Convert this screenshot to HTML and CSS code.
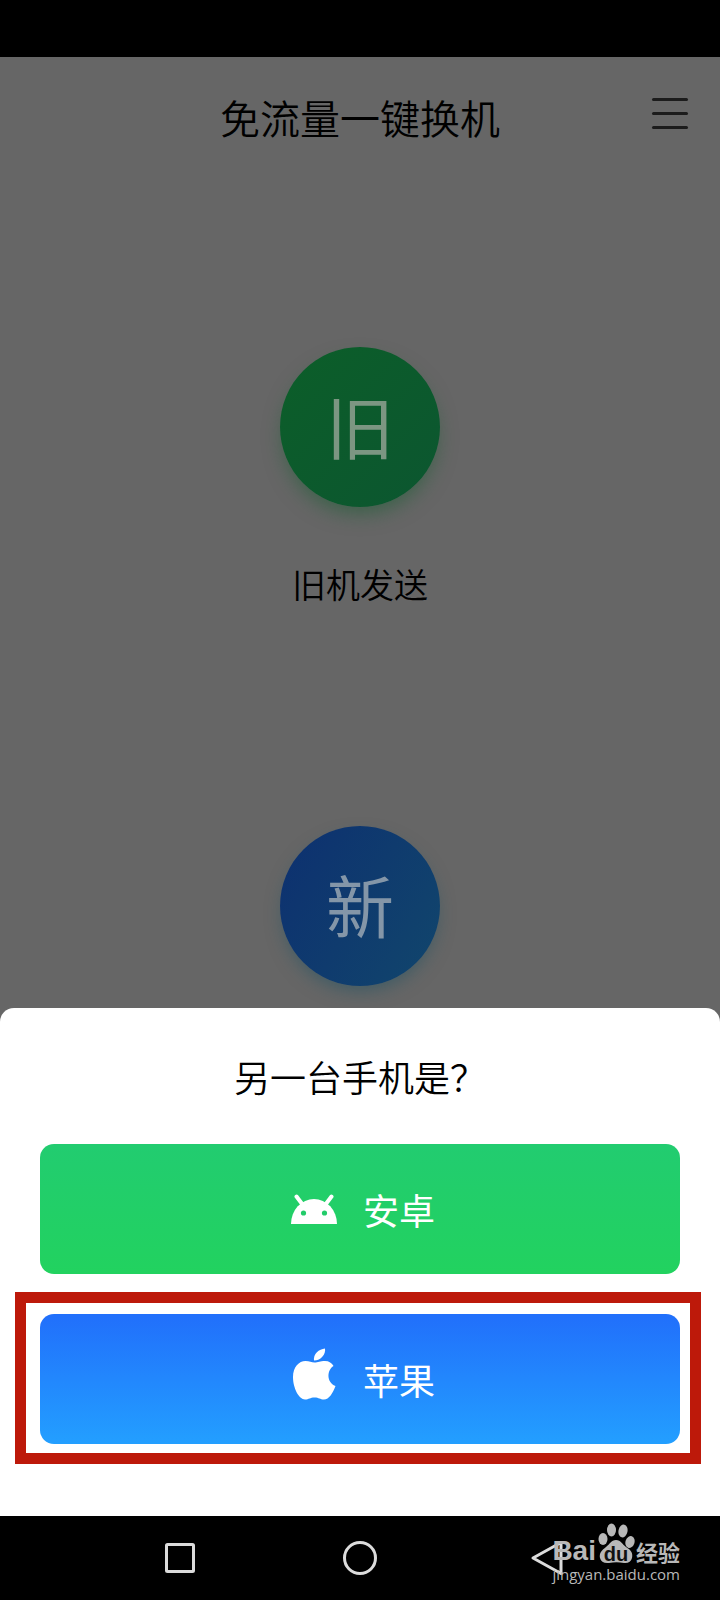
FILE: index.html
```html
<!DOCTYPE html>
<html lang="zh-CN">
<head>
  <meta charset="UTF-8" />
  <meta name="viewport" content="width=device-width, initial-scale=1" />
  <title>免流量一键换机</title>
  <link rel="stylesheet" href="styles.css">
</head>
<body>

  <div class="status-bar"></div>

  <header class="top-bar">
    <h1>免流量一键换机</h1>
    <button class="menu-button" aria-label="菜单">
      <span></span>
      <span></span>
      <span></span>
    </button>
  </header>

  <main class="devices">
    <div class="device">
      <button class="circle old">旧</button>
      <div class="device-label">旧机发送</div>
    </div>
    <div class="device">
      <button class="circle new">新</button>
    </div>
  </main>

  <section class="sheet">
    <h2>另一台手机是&#xFF1F;</h2>
    <button class="choice android">
      <svg width="46" height="30" viewBox="0 0 46 30">
        <path d="M0 30A23 25 0 0 1 46 30z" fill="#fff" />
        <path d="M5.500 2.500l6 8M40.500 2.500l-6 8" stroke="#fff" stroke-width="4" stroke-linecap="round" />
        <circle cx="12.500" cy="19" r="2.600" fill="#22cc6a" />
        <circle cx="33.500" cy="19" r="2.600" fill="#22cc6a" />
      </svg>
      安卓
    </button>
    <button class="choice apple">
      <svg width="46" height="52" viewBox="0 0 46 52">
        <path d="M23 12.500C22 6 28 1 34 0.500C35 6 30 12.500 23 12.500z" fill="#fff" />
        <path d="M23.500 14.500C27 14.500 29 13 34 13C38 13 41 15 42.500 18C36 22 35 34 44.500 38C42 45 38 51.500 33 51.500C29 51.500 28 49.500 23.500 49.500C19 49.500 18 51.500 14 51.500C8 51.500 2 40 2 29C2 19 8 13 14.500 13C18.500 13 20.500 14.500 23.500 14.500z" fill="#fff" />
      </svg>
      苹果
    </button>
  </section>

  <nav class="nav-bar">
    <button aria-label="最近任务">
      <svg width="36" height="36" viewBox="0 0 36 36"><rect x="4.500" y="4.500" width="27" height="27" rx="1" /></svg>
    </button>
    <button aria-label="主页">
      <svg width="36" height="36" viewBox="0 0 36 36"><circle cx="18" cy="18" r="15.500" /></svg>
    </button>
    <button class="back" aria-label="返回">
      <svg width="36" height="36" viewBox="0 0 36 36"><path d="M31 2.500v31L3 18z" stroke-linejoin="round" /></svg>
    </button>
    <div class="watermark">
      <div class="brand">
        <span>Bai</span>
        <span class="paw">
          <svg width="38" height="42" viewBox="0 0 38 42">
            <ellipse cx="6" cy="17" rx="4.500" ry="6" />
            <ellipse cx="14.500" cy="8" rx="4.500" ry="6.500" />
            <ellipse cx="26" cy="9" rx="4.500" ry="6.500" transform="rotate(12 26 9)" />
            <ellipse cx="33" cy="20" rx="4.500" ry="6" transform="rotate(18 33 20)" />
            <path d="M19 18C24 18 25 22 29 25C34 28 36 31 35 36C34 40 31 41.500 27 41C22 40 17 40 12 41C7 41.500 4 40 3 36C2 31 5 28 9 25C13 22 14 18 19 18z" />
          </svg>
          <b>du</b>
        </span>
        <span class="brand-cn">经验</span>
      </div>
      <div class="url">jingyan.baidu.com</div>
    </div>
  </nav>

</body>
</html>
```
FILE: styles.css
```css
* {
  box-sizing: border-box;
}

body {
  margin: 0;
  min-height: 100vh;
  display: flex;
  flex-direction: column;
  background: #666;
  color: #000;
  font-family: "Noto Sans CJK SC", sans-serif;
}

button {
  margin: 0;
  padding: 0;
  border: 0;
  background: none;
  font-family: inherit;
  cursor: pointer;
}

h1, h2 {
  margin: 0;
  font-weight: 350;
}

.status-bar {
  height: 57px;
  background: #000;
}

.top-bar {
  display: grid;
  grid-template-columns: 1fr auto 1fr;
  align-items: center;
  height: 120px;
  padding: 0 32px;
}

.top-bar h1 {
  grid-column: 2;
  font-size: 40px;
  line-height: 60px;
}

.menu-button {
  display: flex;
  flex-direction: column;
  gap: 11px;
  justify-self: end;
  padding-bottom: 8px;
}

.menu-button span {
  width: 36px;
  height: 3px;
  border-radius: 2px;
  background: #1c1c1c;
}

.devices {
  flex: 1;
  display: flex;
  flex-direction: column;
  gap: 217px;
  padding-top: 170px;
}

.device {
  display: flex;
  flex-direction: column;
  align-items: center;
  gap: 52px;
}

.circle {
  width: 160px;
  height: 160px;
  padding-bottom: 4px;
  border-radius: 50%;
  font-size: 68px;
  font-weight: 400;
  line-height: 100px;
}

.circle.old {
  background: linear-gradient(135deg, #0c5e29, #0c5630);
  box-shadow: 0 10px 20px -4px rgba(12, 94, 41, 0.5);
  color: #7c9682;
}

.circle.new {
  background: linear-gradient(120deg, #0d3070, #11466c);
  box-shadow: 0 8px 18px -4px rgba(17, 80, 100, 0.5);
  color: #8496a8;
}

.device-label {
  font-size: 34px;
  font-weight: 350;
  line-height: 50px;
}

.sheet {
  display: flex;
  flex-direction: column;
  gap: 40px;
  padding: 40px 40px 72px;
  border-radius: 14px 14px 0 0;
  background: #fff;
}

.sheet h2 {
  font-size: 36px;
  line-height: 56px;
  text-align: center;
}

.choice {
  position: relative;
  display: flex;
  align-items: center;
  justify-content: center;
  gap: 26px;
  height: 130px;
  padding-left: 6px;
  border-radius: 14px;
  color: #fff;
  font-size: 36px;
  font-weight: 400;
  line-height: 54px;
}

.choice.android {
  background: linear-gradient(#22cc70, #22d25f);
}

.choice.apple {
  background: linear-gradient(#216ffb, #239fff);
}

.choice.apple svg {
  margin-bottom: 10px;
}

/* red frame around the recommended choice */
.choice.apple::after {
  content: "";
  position: absolute;
  inset: -22px -21px -20px -25px;
  border: 11px solid #bd190a;
}

.nav-bar {
  position: relative;
  display: grid;
  grid-template-columns: repeat(3, 1fr);
  align-items: center;
  height: 84px;
  padding: 0 12.5%;
  background: #000;
}

.nav-bar button {
  display: flex;
  justify-content: center;
}

.nav-bar .back {
  padding-left: 16px;
}

.nav-bar button svg {
  fill: none;
  stroke: #dcdcdc;
  stroke-width: 3;
}

.watermark {
  position: absolute;
  right: 40px;
  bottom: 16px;
  color: #b8b8b8;
}

.brand {
  display: flex;
  align-items: flex-end;
  justify-content: space-between;
  font-family: "Liberation Sans", sans-serif;
  font-size: 28px;
  font-weight: bold;
  line-height: 26px;
}

.brand-cn {
  font-family: "Noto Sans CJK SC", sans-serif;
  font-size: 22px;
}

.paw {
  position: relative;
  display: flex;
}

.paw svg {
  fill: #b8b8b8;
}

.paw b {
  position: absolute;
  left: 0;
  right: 0;
  bottom: 0;
  color: #111;
  font-size: 20px;
  line-height: 20px;
  text-align: center;
}

.url {
  font-family: "Open Sans", sans-serif;
  font-size: 15px;
  line-height: 20px;
}
```
